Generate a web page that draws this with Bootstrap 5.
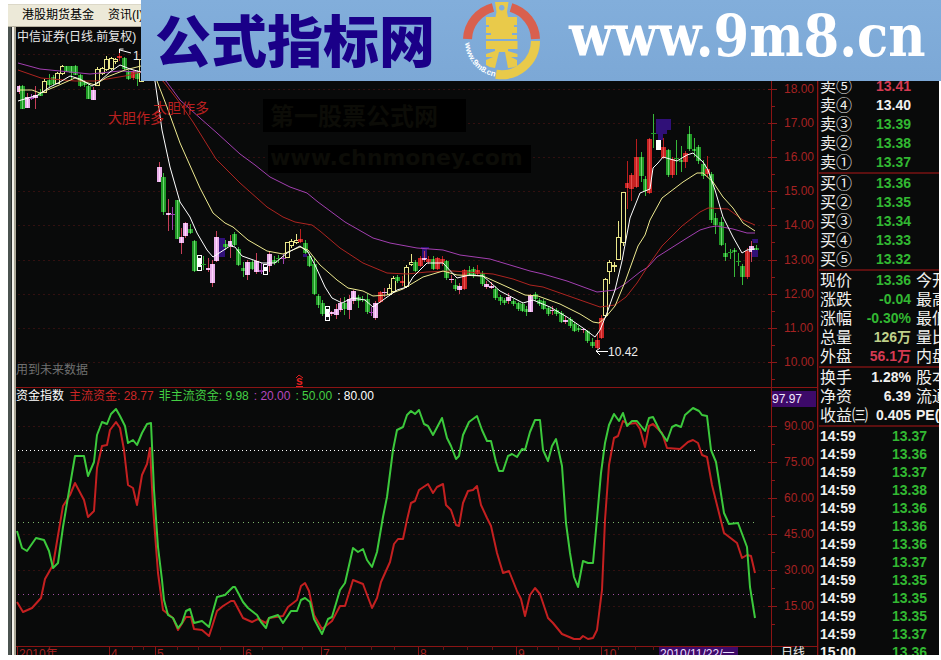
<!DOCTYPE html>
<html lang="zh-CN">
<head>
<meta charset="utf-8">
<meta name="viewport" content="width=device-width, initial-scale=1">
<title>中信证券 日线</title>
<link href="https://cdn.jsdelivr.net/npm/bootstrap@5.3.0/dist/css/bootstrap.min.css" rel="stylesheet">
<style>
body{background:#fff;font-family:"Liberation Sans","Noto Sans CJK SC",sans-serif;font-size:12px;line-height:18px}
.terminal{padding:4px 2px 5px 8px}
.menu-strip{background:#ece9d8;height:23px;padding-left:14px;gap:14px;border-top:1px solid #dcd8c8;border-bottom:1px solid #b5b19f}
.menu-strip a{color:#000;text-decoration:none;line-height:20px}
.workspace{background:#090a0a;min-height:0}
.rail{width:8px;flex:none;background:linear-gradient(90deg,#4b5350 0 3px,#2c302e 3px 4px,#f4f2ea 4px 6px,#aaa695 6px 8px)}
.chart-title{height:19px;color:#e8e8e8;padding-left:1px;line-height:20px}
.legend-row{height:18px;gap:5px;white-space:nowrap}
.peak-tag{background:#3d0a69;color:#f0e8ff;width:44px;margin-right:2px;height:16px;line-height:16px;margin-top:4px;position:relative}
svg{display:block;overflow:visible}
.c-red{color:#cc2626}.c-green{color:#44d044}.c-purple{color:#b548bd}
.tick-label{fill:#a52222;font-size:12px}
.quote{width:121px;flex:none;padding-top:50px;color:#f0f0ee;border-left:1px solid #3a0808}
.quote table{width:100%;table-layout:fixed;border-collapse:collapse}
.quote td,.quote th{padding:0;font-weight:700;font-size:14px;height:19px;line-height:19px;white-space:nowrap}
.quote th,.quote .more{font-weight:400;font-size:16px}
.quote th{padding-left:1px}
.quote tbody+tbody tr:first-child>*{border-top:2px solid #5c1010}
.quote td{text-align:right}
.quote .more{text-align:left;padding-left:5px;overflow:hidden}
.quote .pe{font-weight:700;font-size:14px}
.quote .ticks td,.quote .ticks th{height:18px;line-height:18px;font-size:14px;font-weight:700}
.quote .ticks td{padding-right:12px}
.up{color:#d63a52}.down{color:#32b832}.vol{color:#bfd08a}
.site-banner{position:absolute;top:0;right:0;left:141px;height:81px;background:linear-gradient(#82aedb,#7ca8d6);padding-left:14px;overflow:hidden}
.site-name{font-family:"Noto Sans CJK SC",sans-serif;font-weight:900;font-size:56px;line-height:76px;color:#1a0088;white-space:nowrap}
.site-url{font-family:"DejaVu Serif Condensed","DejaVu Serif",serif;font-weight:700;font-size:57px;line-height:72px;color:#fff;text-decoration:none;white-space:nowrap}
</style>
<script src="https://cdn.jsdelivr.net/npm/bootstrap@5.3.0/dist/js/bootstrap.bundle.min.js"></script>
</head>
<body>
<div class="terminal vh-100 d-flex flex-column overflow-hidden position-relative">
  <nav class="menu-strip d-flex flex-shrink-0">
    <a href="#">港股期货基金</a><a href="#">资讯(I)</a>
  </nav>
  <div class="workspace d-flex flex-grow-1 overflow-hidden">
    <div class="rail"></div>
    <main class="flex-grow-1 overflow-hidden">
      <div class="chart-title">中信证券(日线.前复权)</div>
      <svg id="price" viewBox="16 46 802 341" width="100%">
        <g id="priceAxis"></g>
        <rect x="263" y="99" width="203" height="33" fill="#000"/>
        <text x="270" y="125" font-size="24" font-weight="700" fill="#0c0c07">第一股票公式网</text>
        <rect x="268" y="145" width="263" height="28" fill="#000"/>
        <text x="270" y="165" font-size="22" font-weight="700" font-family="DejaVu Sans" fill="#0c0c07">www.chnmoney.com</text>
        <g id="candles"></g>
        <g fill="#301078"><path d="M656 119h15v11h-4v4h-4v6h-5v-6h-2z"/><path d="M421 247h8v2h-2v9h-2v-7h-1v7h-2v-9h-1z"/><path d="M752 239h6v4h-5zM752 250h6v7h-6zM303 254h4v3h-4z"/></g>
        <rect x="656" y="140" width="5" height="10" fill="#fff"/>
        <g fill="none" stroke-width="1">
          <polyline stroke="#a23fb0" points="18,63 40,69 60,71 90,74 120,71 141,72 166,81 180,100 200,118 217,133 240,154 255,165 270,177 290,187 307,193 318,202 345,222 373,238 390,243 417,248 443,250 460,255 490,259 530,271 543,274 567,281 597,292 615,290 625,284 640,272 648,267 657,257 687,238 700,230 710,227 717,226 733,229 747,233 755,233"/>
          <polyline stroke="#ad2420" points="18,70 41,78 75,81 95,81 125,76 141,72 163,81 180,103 193,122 216,159 240,183 267,207 283,217 295,222 312,225 320,231 340,248 363,263 387,273 407,274 427,272 453,271 493,274 513,279 530,285 543,287 600,307 615,305 626,297 637,283 648,266 662,246 682,226 700,212 708,208 728,209 743,220 755,225"/>
          <polyline stroke="#eeea90" points="18,90 32,90 40,93 57,86 75,78 85,82 95,85 107,77 125,70 141,66 157,81 167,107 180,143 192,170 200,188 213,213 225,223 233,227 248,240 267,251 283,254 300,247 308,250 320,265 337,280 348,288 363,291 373,296 387,295 403,289 423,277 443,271 457,275 483,276 503,285 525,295 538,296 560,304 580,314 593,322 599,323 605,318 615,306 625,282 638,246 645,235 650,220 662,198 683,182 697,173 703,173 713,182 723,197 733,208 743,223 755,231"/>
          <polyline stroke="#fff" points="18,101 38,95 50,87 60,82 70,76 80,79 92,86 100,81 110,72 120,65 130,69 141,72 155,81 162,130 170,167 180,202 190,217 197,233 207,250 213,257 230,246 235,247 242,256 262,263 275,263 287,253 300,246 308,252 315,265 325,287 332,298 342,303 352,298 365,300 373,307 383,300 397,290 407,287 413,277 427,263 443,263 457,278 470,275 483,276 500,291 523,303 533,300 550,307 567,317 583,328 595,337 600,330 607,313 615,290 622,261 630,218 640,193 650,189 653,168 658,163 663,157 677,161 687,155 693,153 703,162 708,170 715,190 723,217 733,237 742,253 747,250 755,249"/>
        </g>
        <g font-size="14" fill="#b82020"><text x="108" y="123">大胆作多</text><text x="153" y="113">大胆作多</text></g>
        <text x="16" y="374" font-size="12" fill="#707070">用到未来数据</text>
        <g stroke="#fff" fill="none"><path d="M596 351.500h12M600 348l-4 3 4 4M119.500 53v-4h4M120 50l11 3"/></g>
        <g fill="#eee" font-size="12"><text x="608" y="356">10.42</text><text x="133" y="60">1</text></g>
        <text x="296" y="385" font-size="12" font-weight="700" fill="#e02020">s</text><path d="M296 378l3-3 4 3M296 386.500h7" stroke="#e02020" fill="none"/>
      </svg>
      <div class="legend-row d-flex">
        <span class="text-white">资金指数</span><span class="c-red">主流资金: 28.77</span><span class="c-green">非主流资金: 9.98</span><span class="c-purple">: 20.00</span><span class="c-green">: 50.00</span><span class="text-white">: 80.00</span>
        <span class="peak-tag ms-auto">97.97</span>
      </div>
      <svg viewBox="16 405 802 250" width="100%">
        <g id="fundAxis"></g>
        <g fill="none" stroke-width="1" stroke-dasharray="1 4"><path d="M18 450.500H757" stroke="#fff" stroke-dasharray="1 3"/><path d="M18 522.500H757" stroke="#7cb46c"/><path d="M18 594.500H757" stroke="#a050a0"/></g>
        <g fill="none" stroke-width="2" stroke-linejoin="round">
          <polyline stroke="#c42020" points="17,602 23,612 32,608 41,598 45,579 53,565 63,506 70,495 75,483 84,500 88,517 94,511 97,468 102,446 107,445 110,430 116,422 120,428 124,450 128,485 133,488 137,505 142,475 147,464 150,448 153,507 158,573 163,610 173,618 178,630 186,617 191,617 194,629 202,630 209,636 212,627 217,611 223,606 231,601 234,601 243,618 252,622 258,619 266,623 269,618 283,616 288,607 297,600 301,586 305,583 309,591 314,615 322,629 332,621 340,606 345,606 353,580 363,584 372,608 377,598 381,582 390,562 394,544 398,539 403,539 407,520 411,503 415,501 419,490 428,484 433,493 437,487 443,484 446,505 451,510 456,525 459,526 463,503 468,491 473,490 477,486 481,505 487,518 491,526 497,553 503,573 509,571 517,591 521,599 525,616 530,595 535,588 540,594 548,618 553,623 562,634 574,639 580,639 583,636 588,639 593,638 597,630 602,590 605,520 609,465 614,438 618,436 623,421 628,424 636,423 640,429 645,447 649,426 653,424 662,433 667,448 680,449 688,442 693,440 698,443 702,455 707,457 712,485 724,533 737,543 742,558 747,555 751,556 755,573"/>
          <polyline stroke="#3cc93c" points="17,531 22,548 27,551 36,538 44,540 49,551 53,568 58,563 63,527 68,497 75,456 84,456 88,476 94,462 97,435 102,422 107,424 111,414 116,409 120,416 125,426 128,443 133,440 137,445 142,433 147,424 151,423 154,490 158,547 162,580 164,600 168,615 173,618 178,628 182,623 186,611 190,609 194,623 202,621 209,627 212,615 217,597 225,595 233,587 235,587 243,602 248,608 257,615 261,622 266,628 269,618 278,615 283,623 291,611 297,611 301,600 305,598 310,602 314,619 322,634 328,619 332,617 340,590 345,583 353,548 358,552 363,549 367,560 372,567 377,552 383,517 387,497 393,450 397,430 403,427 407,415 411,411 415,414 419,410 424,424 428,426 433,435 442,418 447,438 451,446 456,459 459,456 463,435 469,422 477,416 482,430 487,441 491,441 496,462 499,471 503,471 508,456 512,454 517,457 522,449 525,450 530,432 535,420 540,420 543,450 548,461 552,446 556,439 562,466 566,523 570,553 574,577 578,587 583,561 588,563 593,563 596,530 601,473 605,443 609,425 614,414 619,421 623,413 627,426 632,421 637,421 645,431 649,418 653,417 660,431 667,441 672,427 676,425 681,427 685,415 693,408 699,411 702,415 707,416 711,450 716,462 724,513 729,524 738,523 747,547 750,587 755,618"/>
        </g>
        <rect x="659" y="647" width="79" height="12" fill="#3d0a69"/>
        <text x="660" y="658" font-size="12" fill="#e8dcff">2010/11/22/一</text>
        <text x="781" y="657" font-size="12" fill="#eee">日线</text>
      </svg>
    </main>
    <aside class="quote overflow-hidden">
      <table>
        <colgroup><col style="width:46px"><col style="width:46px"><col></colgroup>
        <tbody>
          <tr><th>卖⑤</th><td class="up">13.41</td><td></td></tr>
          <tr><th>卖④</th><td>13.40</td><td></td></tr>
          <tr><th>卖③</th><td class="down">13.39</td><td></td></tr>
          <tr><th>卖②</th><td class="down">13.38</td><td></td></tr>
          <tr><th>卖①</th><td class="down">13.37</td><td></td></tr>
        </tbody>
        <tbody>
          <tr><th>买①</th><td class="down">13.36</td><td></td></tr>
          <tr><th>买②</th><td class="down">13.35</td><td></td></tr>
          <tr><th>买③</th><td class="down">13.34</td><td></td></tr>
          <tr><th>买④</th><td class="down">13.33</td><td></td></tr>
          <tr><th>买⑤</th><td class="down">13.32</td><td></td></tr>
        </tbody>
        <tbody>
          <tr><th>现价</th><td class="down">13.36</td><td class="more">今开</td></tr>
          <tr><th>涨跌</th><td class="down">-0.04</td><td class="more">最高</td></tr>
          <tr><th>涨幅</th><td class="down">-0.30%</td><td class="more">最低</td></tr>
          <tr><th>总量</th><td class="vol">126万</td><td class="more">量比</td></tr>
          <tr><th>外盘</th><td class="up">56.1万</td><td class="more">内盘</td></tr>
        </tbody>
        <tbody>
          <tr><th>换手</th><td>1.28%</td><td class="more">股本</td></tr>
          <tr><th>净资</th><td>6.39</td><td class="more">流通</td></tr>
          <tr><th>收益㈢</th><td>0.405</td><td class="more pe">PE(动)</td></tr>
        </tbody>
        <tbody class="ticks" id="ticks"></tbody>
      </table>
    </aside>
  </div>
  <header class="site-banner d-flex">
    <div class="site-name">公式指标网</div>
    <svg class="flex-shrink-0 ms-4" width="86" height="81" viewBox="459 0 86 81" role="img" aria-label="9m8">
      <g fill="none" stroke-width="9">
        <path d="M467.500 39A34 34 0 0 1 493 7.500M511 7.500A34 34 0 0 1 535.500 39" stroke="#d9604e"/>
        <path d="M535.500 41A34 34 0 0 1 496 74.300" stroke="#e9ca4a"/>
      </g>
      <path fill="#e9ca4a" fill-rule="evenodd" d="M495 2H508.500L507 12 508 17H517V25H514V27H517V33H512V35H517V39H486V35H491V33H486V27H489V25H486V17H495.500L496.500 12ZM501.700 5A2.800 2.800 0 1 0 501.800 5ZM486 41H517.500V49H508V51L517.500 54V57H511L517 60V66Q513 68 508 68L505 52H499L495 68Q490 68 486 65V60L493 57H486V54L495 51V49H486Z"/>
      <path id="ring" d="M465 43A37 37 0 0 0 497 77" fill="none"/>
      <text font-size="8" font-weight="700" fill="#fff"><textPath href="#ring">www.9m8.cn</textPath></text>
    </svg>
    <a class="site-url ms-4" href="#">www.9m8.cn</a>
  </header>
</div>
<script>
// Candles: x, high, low, body top, body bottom, kind
// g falling, m pink, r rising, y hollow yellow, w highlighted, p purple wick
const data = `19 85 94 86 92 m;22 85 109 86 109 g;27 93 108 97 108 m;31 94 100 97 99 p;35 86 109 95 98 m;40 89 96 92 96 g;44 79 93 81 93 y;49 74 87 80 85 g;53 75 86 77 84 g;57 72 84 73 84 y;62 65 75 66 74 y;66 66 72 66 72 g;71 66 80 66 73 g;75 65 75 66 75 g;80 74 87 75 86 g;84 80 87 82 85 g;88 84 99 86 99 g;93 87 100 90 100 m;97 67 86 69 86 y;102 67 75 68 74 y;106 56 71 59 70 y;111 57 70 58 69 y;115 58 64 59 62 y;119 51 61 56 58 r;124 57 70 58 69 g;128 70 80 71 79 g;133 70 80 71 78 r;137 70 86 72 79 g;141 58 82 59 82 y
159 162 182 167 182 m;163 173 215 177 212 g;168 199 231 213 215 m;172 207 230 214 215 p;177 200 239 200 239 g;181 228 254 237 243 m;185 222 238 223 236 m;190 224 234 229 233 g;194 240 272 241 271 g;199 255 271 255 271 w;203 256 270 264 265 g;208 258 272 268 270 m;212 260 287 264 283 m;216 231 262 237 261 m;221 238 257 238 257 i;225 240 250 244 247 g;230 235 258 241 246 m;234 232 246 234 245 g;238 247 266 249 265 g;243 262 277 268 271 g;247 260 280 262 275 m;252 260 270 262 269 g;256 253 274 261 272 m;261 263 274 270 272 p;265 264 275 264 275 w;269 251 272 254 266 m;274 256 265 260 263 g;278 255 263 258 259 g;283 254 264 258 259 p;287 242 258 242 258 y;291 239 248 241 246 y;296 234 244 240 243 y;300 229 243 239 242 r;305 240 254 243 253 g;309 254 267 256 266 g;314 258 295 264 294 g;318 294 308 296 305 g;322 300 316 303 314 g;327 306 321 306 321 w;331 311 316 312 314 m;336 304 319 309 315 m;340 298 312 303 310 m;344 297 315 303 309 g;349 295 319 299 310 m;353 290 304 291 301 m;358 295 308 297 301 g;362 296 302 299 300 g;367 294 314 299 312 g;371 307 316 312 313 p;375 301 320 303 318 m;380 291 303 292 302 r;384 288 297 292 293 m;389 284 296 288 295 y;393 276 292 278 292 y;397 275 283 277 281 g;402 276 286 281 283 r;406 265 288 267 287 y;411 254 266 262 265 y;415 260 272 262 271 g;420 256 267 258 266 r;424 250 262 258 260 m;428 256 264 259 262 r;433 256 270 259 269 g;437 257 270 258 269 r;442 256 266 259 263 r;446 260 280 261 278 g;451 275 283 279 280 m;455 279 291 285 289 g;459 283 294 286 290 m;464 269 290 270 289 r;469 266 276 270 275 g;473 267 278 269 276 g;477 265 276 270 274 r;482 271 286 273 284 g;486 281 289 284 287 m;491 282 289 286 288 m;495 286 300 289 298 g;500 295 305 297 301 g;504 298 305 300 303 g;508 293 304 297 301 m;513 299 306 301 304 g;518 302 311 303 309 g;522 302 312 304 311 g;526 306 316 309 312 g;530 294 312 295 312 m;535 292 301 294 299 g;539 298 306 300 304 g;543 299 310 301 309 g;548 306 316 308 314 g;552 306 315 310 311 m;556 308 316 310 314 g;561 311 323 313 322 g;565 316 324 320 322 m;570 317 328 319 326 g;574 322 332 324 331 g;578 326 332 328 330 g;583 328 333 329 330 m;587 330 343 331 341 g;592 338 348 342 346 g;597 334 349 340 348 r;601 315 339 318 338 r;605 278 317 279 316 y;609 260 284 262 272 y;614 262 272 265 266 y;618 221 260 237 260 y;623 192 246 192 243 y;627 161 209 183 188 r;631 173 201 175 189 r;636 139 188 157 187 r;641 152 182 157 176 g;645 176 196 179 191 g;649 138 194 139 193 r;653 114 148 133 134 g;658 140 150 140 150 s;663 138 159 147 158 r;668 149 177 150 175 g;672 157 178 159 175 r;676 140 175 158 159 g;681 146 172 160 162 g;685 151 168 153 162 r;689 126 151 134 149 g;694 138 157 149 151 g;698 145 164 147 161 g;703 160 179 164 176 g;707 156 177 169 174 r;711 172 223 174 220 g;715 213 234 218 225 g;721 217 246 222 245 g;725 243 261 253 257 g;730 249 259 252 253 g;734 248 277 250 252 g;738 253 266 261 262 g;742 264 285 266 277 g;747 248 279 251 277 r;751 241 262 246 252 m;756 245 252 248 250 g`;
const body = {g:'#1f9a25',m:'#eab0ea',r:'#c82222',y:'#070808',w:'#fff',s:'#fff',p:'#9d42b0',i:'#301078'};
const wick = {g:'#37b83a',m:'#c63e58',r:'#b81d1d',y:'#e9e68a',w:'#fff',s:'#fff',p:'#9d42b0',i:'#301078'};
const pick = id => document.getElementById(id);
pick('candles').innerHTML = data.split(/[;\n]/).map(s => {
  const [x, h, l, t, b, k] = s.split(' ').map((v, i) => i < 5 ? +v : v);
  const flat = b - t < 1.5;
  let out = `<path d="M${x+.5} ${h}V${l}" stroke="${wick[k]}"/>`;
  if (k === 'y') out += `<rect x="${x-1.5}" y="${t+.5}" width="4" height="${Math.max(1,b-t-1)}" fill="${body.y}" stroke="${wick.y}"/>`;
  else out += `<rect x="${x-2}" y="${t}" width="${k==='i' ? 6 : 5}" height="${b-t}" fill="${body[k]}"/>`;
  if ((k === 'g' || k === 'm' || k === 'r') && !flat) out += `<path d="M${x+.5} ${t}V${b}" stroke="${k==='g'?'#72d675':k==='m'?'#ffd9ff':'#e65050'}"/>`;
  if (k === 'w') out += `<path d="M${x-1} ${t+1}h3v2h-3zM${x-1} ${b-4}h3v3h-3z" fill="#111"/>`;
  return out;
}).join('');
const axis = (ys, labels, half, top, bottom) => ys.map((y, i) =>
  `<path d="M18 ${y+.5}H771" stroke="#321010" stroke-dasharray="2 3"/><path d="M768 ${y+.5}H777M771 ${y+half+.5}h4" stroke="#8a1818"/>` +
  (labels[i] ? `<text class="tick-label" x="784" y="${y+4}">${labels[i]}</text>` : '')).join('') +
  `<path d="M771.500 ${top}V${bottom}M817.500 ${top}V${bottom}" stroke="#8a1414"/>`;
pick('priceAxis').innerHTML = axis([54,89,123,157,191,225,260,294,328,362],
  ['','18.00','17.00','16.00','15.00','14.00','13.00','12.00','11.00','10.00'], 17, 27, 387) +
  '<path d="M16 387.500H818" stroke="#8a1414"/>';
const months = [[18,'2010年'],[110,'4'],[156,'5'],[244,'6'],[322,'7'],[419,'8'],[517,'9'],[602,'10']];
pick('fundAxis').innerHTML = axis([426,462,498,534,570,606], ['90.00','75.00','60.00','45.00','30.00','15.00'], 18, 387, 655) +
  '<path d="M16 646.500H818" stroke="#8a1414"/>' +
  months.map(([x, s]) => `<path d="M${x-.5} 646v9" stroke="#8a1414"/><text class="tick-label" x="${x+1}" y="658">${s}</text>`).join('') +
  [132,143,177,198,220,262,282,302,345,371,394,443,467,492,537,558,579,618,635,653].map(x => `<path d="M${x}.5 646v4" stroke="#6a1414"/>`).join('');
pick('ticks').innerHTML = [37,36,37,38,36,36,36,37,35,35,35,37,36].map((v, i) =>
  `<tr><th>${i < 12 ? '14:59' : '15:00'}</th><td class="down" colspan="2">13.${v}</td></tr>`).join('');
</script>
</body>
</html>
